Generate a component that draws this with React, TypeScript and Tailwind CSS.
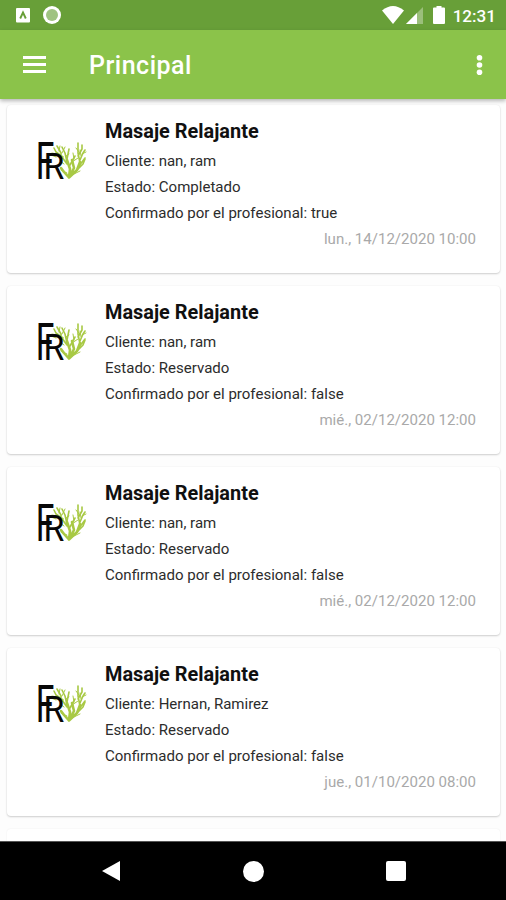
type Booking = { client: string; status: string; confirmed: string; date: string };

const bookings: Booking[] = [
  { client: "nan, ram", status: "Completado", confirmed: "true", date: "lun., 14/12/2020 10:00" },
  { client: "nan, ram", status: "Reservado", confirmed: "false", date: "mié., 02/12/2020 12:00" },
  { client: "nan, ram", status: "Reservado", confirmed: "false", date: "mié., 02/12/2020 12:00" },
  { client: "Hernan, Ramirez", status: "Reservado", confirmed: "false", date: "jue., 01/10/2020 08:00" },
];

function Logo() {
  return (
    <svg viewBox="0 0 50 44" className="mt-[31px] ml-[30px] h-[44px] w-[50px] shrink-0 overflow-visible" fill="none">
      <g stroke="#a8c944" strokeLinecap="round" strokeLinejoin="round">
        <path strokeWidth="2.6" d="M32 41.5 27 36 24 32M32 41.5 33 33 30 24M32 41.5 40 34 43 26M32 41.5 37 32 35 24" />
        <path strokeWidth="1.6" d="M30 28 25 21 18 18M24 24 24 17 20 10M26 21 19 16 17 12M30 26 28 17 25 11M30 23 32 13M33 29 38 20M40 34 46 28 48 23M43 27 41 17 41 7M43 24 46 17 48 14M41 20 45 13 45 9M42 30 48 22" />
        <path strokeWidth="1" d="M22 15 23 10M19 21 14 19M25 17 28 11M20 18 15 17M42 16 39 12M44 20 43 14M45 18 49 16M30 37 24 34M35 39 43 35M29 20 32 18M37 23 36 17M35 26 41 22M27 28 23 25" />
      </g>
      <g fill="#080808" fontFamily='Roboto, "Liberation Sans", sans-serif'>
        <text transform="translate(-1.2 42.8) scale(.64 1)" fontSize="52.5">F</text>
        <text transform="translate(6.4 42.8) scale(.9 1)" fontSize="37.5">R</text>
      </g>
    </svg>
  );
}

function BookingCard({ client, status, confirmed, date }: Booking) {
  return (
    <article className="flex h-[168px] shrink-0 rounded-[4px] bg-white shadow-[0_1px_2px_rgba(0,0,0,0.18),0_0_2px_rgba(0,0,0,0.05)]">
      <Logo />
      <div className="ml-[18px] flex flex-1 flex-col pt-[14px] pr-[24px] text-[15.04px] leading-[26.2px] text-[#2c2c2c]">
        <h2 className="mb-[2.8px] text-[19.9px] leading-[26px] font-bold text-[#101010]">Masaje Relajante</h2>
        <p>Cliente: {client}</p>
        <p>Estado: {status}</p>
        <p>Confirmado por el profesional: {confirmed}</p>
        <p className="self-end text-[#a9a9a9]">{date}</p>
      </div>
    </article>
  );
}

function StatusBar() {
  return (
    <div className="flex h-[30px] shrink-0 items-center bg-[#689f38] text-white">
      <svg className="ml-[16px] h-[15px] w-[14px]" viewBox="0 0 14 15">
        <rect width="14" height="14.5" rx="1" fill="#fff" />
        <path d="M4.2 10.5 7 4.5l2.8 6" fill="none" stroke="#689f38" strokeWidth="1.9" />
      </svg>
      <svg className="ml-[13px] h-[18px] w-[18px]" viewBox="0 0 18 18">
        <circle cx="9" cy="9" r="9" fill="#fff" />
        <circle cx="9" cy="9" r="6" fill="#9fc381" />
      </svg>
      <svg className="ml-auto h-[18px] w-[43px]" viewBox="0 0 43 18">
        <path d="M0 4.5Q11 -4.5 22 4.5L11 18Z" fill="#fff" />
        <path d="M41 1V18H24Z" fill="#9bbf7b" />
        <path d="M35 7V18H24Z" fill="#fff" />
      </svg>
      <svg className="ml-[8px] h-[18px] w-[12px]" viewBox="0 0 12 18">
        <path d="M3.5 0h5v1.5H11q1 0 1 1V17q0 1-1 1H1q-1 0-1-1V2.5q0-1 1-1h2.5Z" fill="#fff" />
      </svg>
      <span className="mt-[1px] mr-[10px] ml-[8px] text-[17.1px] leading-[20px] font-medium">12:31</span>
    </div>
  );
}

export default function App() {
  return (
    <div className="flex h-[900px] w-[506px] flex-col overflow-hidden bg-[#fdfdfd] font-[Roboto,'Liberation_Sans',sans-serif]">
      <StatusBar />
      <header className="relative flex h-[69px] shrink-0 items-center bg-[#8bc34a] text-white shadow-[0_2px_4px_rgba(0,0,0,0.28)]">
        <div className="ml-[23px] flex w-[23px] flex-col gap-[4px]">
          <span className="h-[3px] bg-white" />
          <span className="h-[3px] bg-white" />
          <span className="h-[3px] bg-white" />
        </div>
        <h1 className="mt-[3px] ml-[43px] text-[25px] leading-[30px] font-medium tracking-[0.5px]">Principal</h1>
        <svg className="mr-[23px] ml-auto h-[22px] w-[7px]" viewBox="0 0 7 22" fill="#fff">
          <circle cx="3.5" cy="3.7" r="2.8" />
          <circle cx="3.5" cy="11" r="2.8" />
          <circle cx="3.5" cy="18.3" r="2.8" />
        </svg>
      </header>
      <main className="flex min-h-0 flex-1 flex-col gap-[13px] overflow-hidden pt-[6px] pr-[6px] pl-[7px]">
        {bookings.map((booking, i) => (
          <BookingCard key={i} {...booking} />
        ))}
        <div className="h-[168px] shrink-0 rounded-[4px] bg-white shadow-[0_0_2px_rgba(0,0,0,0.07)]" />
      </main>
      <nav className="flex h-[59px] shrink-0 items-center border-t border-[#555] bg-black">
        <svg className="ml-[102px] h-[20px] w-[18px]" viewBox="0 0 18 20"><path d="M18 0V20L0 10Z" fill="#fff" /></svg>
        <span className="ml-[123px] size-[21px] rounded-full bg-white" />
        <span className="ml-[122px] size-[20px] rounded-[2px] bg-white" />
      </nav>
    </div>
  );
}
